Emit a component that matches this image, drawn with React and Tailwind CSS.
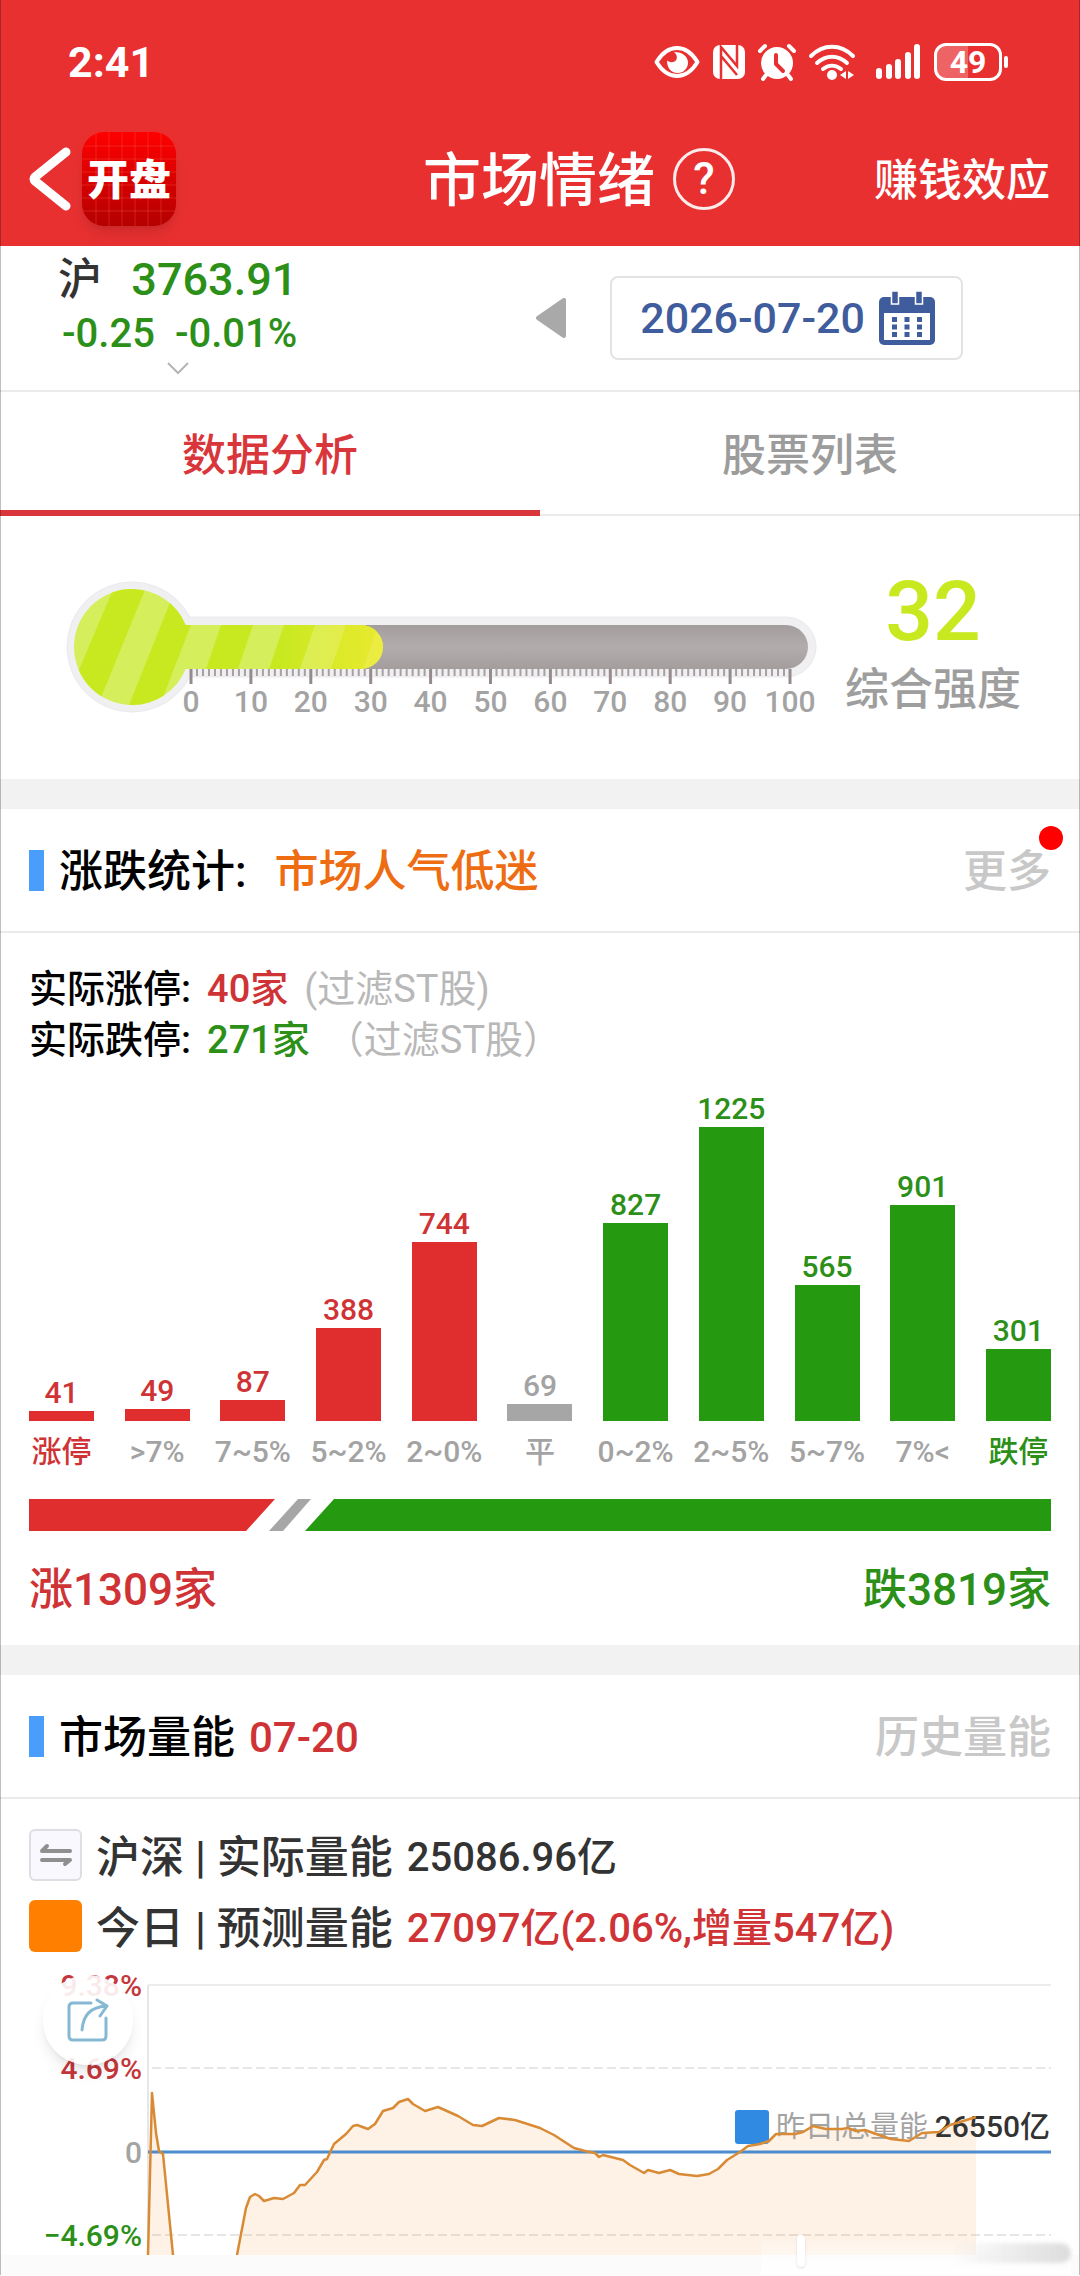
import React, { useState } from "react";

const distribution = [
  { label: "涨停", value: 41, type: "up", strong: true },
  { label: ">7%", value: 49, type: "up" },
  { label: "7~5%", value: 87, type: "up" },
  { label: "5~2%", value: 388, type: "up" },
  { label: "2~0%", value: 744, type: "up" },
  { label: "平", value: 69, type: "flat" },
  { label: "0~2%", value: 827, type: "down" },
  { label: "2~5%", value: 1225, type: "down" },
  { label: "5~7%", value: 565, type: "down" },
  { label: "7%<", value: 901, type: "down" },
  { label: "跌停", value: 301, type: "down", strong: true },
];

const MAX_BAR_HEIGHT = 294;
const maxValue = Math.max(...distribution.map((item) => item.value));

const morningSpike = "119,290 123,128 127,168 130,186 134,189 144,290";

const volumeLine =
  "208,290 212,269 217,243 221,232 226,229 230,231 235,236 245,233 254,234 265,228 271,220 276,220 288,207 295,195 298,194 305,179 317,169 324,161 328,160 339,164 346,159 354,146 364,143 370,137 379,134 384,139 396,146 409,142 429,151 444,160 453,161 470,153 486,155 511,163 525,170 545,183 556,186 566,188 570,192 574,190 594,195 601,200 615,208 619,205 630,208 641,205 650,209 668,211 680,209 689,204 698,195 711,187 719,181 731,179 740,176 747,169 766,169 774,167 784,161 797,164 813,164 819,163 827,166 836,165 850,170 862,174 880,176 893,168 910,167 921,160 931,157 947,152";

const getTextColor = (type) => {
  switch (type) {
    case "up":
      return "text-[#cf3336]";
    case "down":
      return "text-[#2c9018]";
    default:
      return "text-[#a3a3a3]";
  }
};

const getBarColor = (type) => {
  switch (type) {
    case "up":
      return "bg-[#e02e2e]";
    case "down":
      return "bg-[#25990f]";
    default:
      return "bg-[#a6a6a6]";
  }
};

const StatusIcons = () => (
  <div className="flex items-center">
    {/* Eye comfort */}
    <svg className="w-[46px] h-[36px]" viewBox="0 0 46 36" fill="none">
      <path
        d="M2.5 18C8 9 15 4 23 4s15 5 20.500 14C38 27 31 32 23 32S8 27 2.500 18Z"
        stroke="white"
        strokeWidth="4"
        strokeLinejoin="round"
      />
      <path
        d="M20 8c4 3 4 9-1 10-2 .5-4 0-6-1.500C13 24 17 29 23.500 29S34 24 34 18.500 29 8 20 8Z"
        fill="white"
      />
    </svg>
    {/* NFC */}
    <svg className="w-[34px] h-[36px] ml-3" viewBox="0 0 34 36">
      <rect x="1" y="1" width="32" height="34" rx="7" fill="white" />
      <path
        d="M9 35V3l16 19V2M9 12l16 19M25 1v20M9 15v20"
        stroke="#e83031"
        strokeWidth="2.5"
        fill="none"
      />
    </svg>
    {/* Alarm */}
    <svg className="w-[38px] h-[38px] ml-3" viewBox="0 0 38 38" fill="none">
      <circle cx="19" cy="20" r="16" fill="white" />
      <path
        d="M2 8l5-5M36 8l-5-5M8 32l-3 4M30 32l3 4"
        stroke="white"
        strokeWidth="4"
        strokeLinecap="round"
      />
      <path
        d="M18 12v9l7 7"
        stroke="#e83031"
        strokeWidth="4"
        strokeLinecap="round"
        strokeLinejoin="round"
      />
    </svg>
    {/* Wi-Fi */}
    <svg className="w-[48px] h-[38px] ml-3" viewBox="0 0 48 38" fill="none">
      <path
        d="M3 13C15 .5 33 .5 45 13M9 20c9-8.500 21-8.500 30 0M15 26c5.500-4.500 12.500-4.500 18 0"
        stroke="white"
        strokeWidth="4"
        strokeLinecap="round"
      />
      <circle cx="24" cy="32" r="5" fill="white" />
      <path d="M38 28v8l-6-4ZM40 28v8l6-4Z" fill="white" />
    </svg>
    {/* Signal */}
    <svg className="w-[46px] h-[36px] ml-5" viewBox="0 0 46 36">
      <rect x="0" y="24" width="6" height="11" rx="3" fill="white" />
      <rect x="10" y="20" width="6" height="15" rx="3" fill="white" />
      <rect x="19" y="15" width="6" height="20" rx="3" fill="white" />
      <rect x="29" y="8" width="6" height="27" rx="3" fill="white" />
      <rect x="38" y="0" width="6" height="35" rx="3" fill="white" />
    </svg>
    {/* Battery */}
    <div className="ml-3 flex items-center gap-0.5">
      <div className="w-[68px] h-[38px] rounded-xl border-3 border-white bg-linear-to-r from-white/25 from-50% to-transparent to-50% flex items-center justify-center text-[32px] leading-[32px] font-bold">
        49
      </div>
      <div className="w-1 h-3 rounded-full bg-white"></div>
    </div>
  </div>
);

const Header = () => (
  <header className="bg-[#e83031] text-white pt-10 pb-5">
    <div className="flex items-center justify-between h-[44px] mb-12 pl-[68px] pr-[72px]">
      <div className="text-[43px] leading-[44px] font-bold">2:41</div>
      <StatusIcons />
    </div>
    <div className="grid grid-cols-[1fr_auto_1fr] items-center h-[94px] pl-7 pr-[30px]">
      <div className="flex items-center gap-2.5">
        <button aria-label="返回">
          <svg className="w-[44px] h-[64px]" viewBox="0 0 44 64" fill="none">
            <path
              d="M38 5L7 30q-2 2 0 4l31 25"
              stroke="white"
              strokeWidth="9"
              strokeLinecap="round"
              strokeLinejoin="round"
            />
          </svg>
        </button>
        <div className="relative w-[94px] h-[94px] rounded-[22px] overflow-hidden shadow-lg bg-linear-to-b from-[#ff0000] to-[#b40000] flex items-center justify-center">
          <svg
            className="absolute inset-0 w-full h-full"
            viewBox="0 0 94 94"
            stroke="#ff6a5a"
            strokeOpacity="0.3"
          >
            <path d="M14 0v94M27 0v94M40 0v94M53 0v94M66 0v94M79 0v94M0 14h94M0 27h94M0 40h94M0 53h94M0 66h94M0 79h94" />
          </svg>
          <span className="relative pt-1 text-[42px] leading-[50px] font-black">
            开盘
          </span>
        </div>
      </div>
      <h1 className="pt-1 text-[58px] leading-[64px]">市场情绪</h1>
      <div className="flex items-center justify-between pl-[18px]">
        <button
          aria-label="帮助"
          className="w-[62px] h-[62px] rounded-full border-3 border-white/90 text-[44px] leading-[56px]"
        >
          ?
        </button>
        <a href="#profit" className="pt-1 text-[44px] leading-[60px]">
          赚钱效应
        </a>
      </div>
    </div>
  </header>
);

const QuoteBar = () => (
  <div className="flex justify-between h-[146px] pl-[58px] pr-[117px] border-b-2 border-[#ebebeb]">
    <button className="flex flex-col items-center pt-[7px] text-[#2c9018]">
      <span className="flex w-full items-center justify-between text-[45px] leading-[54px]">
        <span className="text-[44px] text-[#333333]">沪</span>
        3763.91
      </span>
      <span className="flex gap-5 pl-1 text-[40px] leading-[54px]">
        <span>-0.25</span>
        <span>-0.01%</span>
      </span>
      <svg className="w-6 h-3.5" viewBox="0 0 24 14" fill="none">
        <path d="M2 2l10 10L22 2" stroke="#b5b5b5" strokeWidth="2" />
      </svg>
    </button>
    <div className="flex items-center gap-[43px]">
      <button aria-label="前一天">
        <svg className="w-8 h-10" viewBox="0 0 32 40">
          <path
            d="M29 2v36L3 20Z"
            fill="#a9a9a9"
            stroke="#a9a9a9"
            strokeWidth="4"
            strokeLinejoin="round"
          />
        </svg>
      </button>
      <button className="flex items-center gap-3.5 h-[84px] pl-7 pr-[26px] rounded-lg border-2 border-[#e3e3e3] text-[#3f5c9c] text-[43px] leading-[60px]">
        2026-07-20
        <svg className="w-[56px] h-[56px]" viewBox="0 0 56 56">
          <rect y="7" width="56" height="48" rx="5" fill="#3f5c9c" />
          <rect x="5" y="23" width="46" height="27" fill="white" />
          <path
            d="M12.500 1h7v13h-7ZM36.500 1h7v13h-7Z"
            fill="#3f5c9c"
            stroke="white"
            strokeWidth="1.5"
          />
          <path
            d="M13 29.500h30M13 37h30M13 44.500h30"
            stroke="#3f5c9c"
            strokeWidth="5"
            strokeDasharray="5 7.5"
          />
        </svg>
      </button>
    </div>
  </div>
);

const Tabs = () => {
  const [active, setActive] = useState("数据分析");

  return (
    <div className="grid grid-cols-2">
      {["数据分析", "股票列表"].map((tab) => (
        <button
          key={tab}
          onClick={() => setActive(tab)}
          className={`h-[124px] text-[44px] leading-[60px] ${
            active === tab
              ? "pt-2.5 border-b-6 border-[#d9363b] text-[#d9363b]"
              : "pt-1.5 border-b-2 border-[#ebebeb] text-[#9c9c9c]"
          }`}
        >
          {tab}
        </button>
      ))}
    </div>
  );
};

const Thermometer = () => (
  <svg className="flex-1 min-w-0" viewBox="0 0 760 145">
    <defs>
      <linearGradient id="track" x1="0" y1="0" x2="0" y2="1">
        <stop offset="0" stopColor="#a39e9d" />
        <stop offset="0.5" stopColor="#b2adac" />
        <stop offset="1" stopColor="#a39e9d" />
      </linearGradient>
      <linearGradient id="hot" x1="0" y1="0" x2="1" y2="0">
        <stop offset="0" stopColor="#f5ea35" stopOpacity="0" />
        <stop offset="1" stopColor="#f5ea35" stopOpacity="0.75" />
      </linearGradient>
      <clipPath id="mercury">
        <circle cx="72" cy="72" r="58" />
        <path d="M72 50H301a22 22 0 0 1 0 44H72Z" />
      </clipPath>
    </defs>
    <g fill="#f0f0f2" stroke="#eaeaee">
      <circle cx="72" cy="72" r="65" />
      <rect x="72" y="42" width="684" height="60" rx="30" />
    </g>
    <circle cx="72" cy="72" r="64" fill="#f0f0f2" />
    <rect x="100" y="50" width="648" height="44" rx="22" fill="url(#track)" />
    <g clipPath="url(#mercury)">
      <rect width="330" height="145" fill="#d5ef5c" />
      <g fill="#c8e920">
        <path d="M55 10H87L38 130H4Z" />
        <path d="M117 10H146L131 50 100 130H69Z" />
        <path d="M161 50h32l-15 44h-32Z" />
        <path d="M224 50h31l-15 44h-31Z" />
        <path d="M286 50h32l-15 44h-32Z" />
      </g>
      <rect x="220" y="50" width="103" height="44" fill="url(#hot)" />
    </g>
    {Array.from({ length: 101 }, (_, i) => (
      <line
        key={i}
        x1={131 + i * 5.99}
        x2={131 + i * 5.99}
        y1="94"
        y2={i % 10 === 0 ? 109 : 101}
        stroke={i % 10 === 0 ? "#958b8d" : "#a79fa0"}
        strokeWidth={i % 10 === 0 ? 3 : 2}
      />
    ))}
    {Array.from({ length: 11 }, (_, i) => (
      <text
        key={i}
        x={131 + i * 59.9}
        y="137"
        textAnchor="middle"
        fontSize="30"
        fill="#a3a3a3"
      >
        {i * 10}
      </text>
    ))}
  </svg>
);

const SectionTitle = ({ title, note, noteColor, action, dot }) => (
  <div className="flex items-center justify-between h-[124px] px-[29px] border-b-2 border-[#ebebeb] text-[44px] leading-[60px]">
    <div className="flex items-center">
      <div className="w-[15px] h-[41px] mr-[15px] bg-[#4a9dfb]"></div>
      <h2 className="pt-1 text-black">{title}</h2>
      <span className={`pt-1 ${noteColor}`}>{note}</span>
    </div>
    <a href="#more" className="relative pt-1 text-[#c8c8c8]">
      {action}
      {dot && (
        <span className="absolute -top-3 -right-3 w-6 h-6 rounded-full bg-[#ff0000]"></span>
      )}
    </a>
  </div>
);

const Distribution = () => (
  <div className="px-[29px] pt-[31px] pb-[25px]">
    <div className="text-[38px] leading-[51px]">
      <p>
        <span className="text-black">实际涨停:</span>
        <span className="ml-4 text-[#cf3336]">40家</span>
        <span className="ml-4 font-normal text-[#b8b8b8]">(过滤ST股)</span>
      </p>
      <p>
        <span className="text-black">实际跌停:</span>
        <span className="ml-4 text-[#2c9018]">271家</span>
        <span className="ml-4 font-normal text-[#b8b8b8]">（过滤ST股）</span>
      </p>
    </div>

    <div className="flex items-end justify-between mt-[25px] text-[30px] leading-[36px]">
      {distribution.map((item) => (
        <div key={item.label} className="flex flex-col items-center w-[65px]">
          <span className={getTextColor(item.type)}>{item.value}</span>
          <div
            className={`w-full ${getBarColor(item.type)}`}
            style={{ height: `${(item.value / maxValue) * MAX_BAR_HEIGHT}px` }}
          ></div>
          <span
            className={`mt-[13px] whitespace-nowrap ${
              item.strong ? getTextColor(item.type) : "text-[#a3a3a3]"
            }`}
          >
            {item.label}
          </span>
        </div>
      ))}
    </div>

    {/* Up / flat / down share */}
    <svg
      className="block w-full h-8 mt-[29px]"
      viewBox="0 0 1022 32"
      preserveAspectRatio="none"
    >
      <path d="M0 0H246L217 32H0Z" fill="#e02e2e" />
      <path d="M269 0H282L254 32H240Z" fill="#a6a6a6" />
      <path d="M305 0H1022V32H276Z" fill="#25990f" />
    </svg>
    <div className="flex justify-between mt-[29px] text-[44px] leading-[60px]">
      <span className="text-[#cf3336]">涨1309家</span>
      <span className="text-[#2c9018]">跌3819家</span>
    </div>
  </div>
);

const VolumeChart = () => (
  <div className="relative mt-[13px]">
    <svg className="block w-full" viewBox="0 0 1022 290">
      <g stroke="#e6e6e6" strokeWidth="2">
        <path d="M119 20H1022" stroke="#ececec" />
        <path d="M119 20V290" />
        <path d="M123 103H1022M123 270H1022" strokeDasharray="9 4" />
      </g>
      <path
        d={`M119 290L${morningSpike}Z`}
        fill="#fa9338"
        fillOpacity="0.13"
      />
      <path
        d={`M208 290L${volumeLine}L947 290Z`}
        fill="#fa9338"
        fillOpacity="0.13"
      />
      <rect x="706" y="145" width="34" height="34" rx="3" fill="#308ae2" />
      <text x="747" y="172" fontSize="29" fontWeight="400" fill="#a3a3a3">
        昨日|总量能
      </text>
      <text x="1021" y="172" fontSize="30" textAnchor="end" fill="#333333">
        26550亿
      </text>
      <path d="M119 187H1022" stroke="#4a8ccc" strokeWidth="3" />
      <g fill="none" stroke="#d98a35" strokeWidth="2.5" strokeLinejoin="round">
        <polyline points={morningSpike} />
        <polyline points={volumeLine} />
      </g>
      <g fontSize="30" textAnchor="end">
        <text x="113" y="31" fill="#c4373b">
          9.38%
        </text>
        <text x="113" y="114" fill="#c4373b">
          4.69%
        </text>
        <text x="113" y="198" fill="#a3a3a3">
          0
        </text>
        <text x="113" y="281" fill="#2c9018">
          −4.69%
        </text>
      </g>
    </svg>
    <button
      aria-label="分享"
      className="absolute left-3.5 top-2.5 w-[90px] h-[90px] rounded-full bg-white/90 shadow-lg flex items-center justify-center"
    >
      <svg
        className="w-[44px] h-[44px]"
        viewBox="0 0 44 44"
        fill="none"
        stroke="#85b9d3"
        strokeWidth="3"
        strokeLinecap="round"
        strokeLinejoin="round"
      >
        <path d="M25 5H7q-4 0-4 4v29q0 4 4 4h29q4 0 4-4V20" />
        <path d="M16 32C17 18 24 9 40 8M31 2l10 6-7 10" />
      </svg>
    </button>
    {/* Faded mark in the corner */}
    <div className="absolute -right-5 -bottom-5 w-[310px] h-10 bg-linear-to-b from-transparent to-white">
      <div className="absolute right-0 top-2 w-[120px] h-5 rounded-full bg-linear-to-r from-transparent to-[#dcdcdc] blur-[2px]"></div>
      <div className="absolute left-9 top-0 w-2 h-8 rounded-full bg-white shadow-sm"></div>
    </div>
  </div>
);

const VolumeSection = () => (
  <div className="px-[29px] pt-[30px] text-[#333333]">
    <div className="flex items-center h-[52px] mb-[19px] text-[44px] leading-[60px]">
      <button
        aria-label="切换"
        className="w-[53px] h-[52px] mr-3.5 rounded-md border-2 border-[#dedee4] bg-[#f8f8fe] flex items-center justify-center"
      >
        <svg
          className="w-8 h-6"
          viewBox="0 0 32 24"
          fill="none"
          stroke="#8f8f8f"
          strokeWidth="4"
          strokeLinecap="round"
          strokeLinejoin="round"
        >
          <path d="M30 8H2l5-5M2 17h28l-5 4" />
        </svg>
      </button>
      <span className="pt-1.5">沪深 | 实际量能</span>
      <span className="ml-3.5 pt-1.5 text-[40px]">25086.96亿</span>
    </div>
    <div className="flex items-center h-[52px] text-[44px] leading-[60px]">
      <div className="w-[53px] h-[52px] mr-3.5 rounded-md bg-[#ff7f00]"></div>
      <span className="pt-1.5">今日 | 预测量能</span>
      <span className="ml-3.5 pt-1.5 text-[40px] text-[#cf3336]">
        27097亿(2.06%,增量547亿)
      </span>
    </div>
    <VolumeChart />
  </div>
);

const App = () => {
  return (
    <div className="relative overflow-hidden bg-white font-['Roboto','Noto_Sans_CJK_SC',sans-serif] font-medium">
      <Header />
      <QuoteBar />
      <Tabs />
      <section className="flex items-center gap-[25px] py-[59px] pl-[60px] pr-[59px]">
        <Thermometer />
        <div className="text-center">
          <div className="text-[84px] leading-[72px] text-[#c8e920]">32</div>
          <div className="mt-3 text-[44px] leading-[60px] text-[#9e9e9e]">
            综合强度
          </div>
        </div>
      </section>
      <section className="border-t-[30px] border-[#f2f2f2]">
        <SectionTitle
          title="涨跌统计:"
          note="市场人气低迷"
          noteColor="ml-7 text-[#ee6c12]"
          action="更多"
          dot
        />
        <Distribution />
      </section>
      <section className="border-t-[30px] border-[#f2f2f2]">
        <SectionTitle
          title="市场量能"
          note="07-20"
          noteColor="ml-3.5 text-[42px] text-[#cf3336]"
          action="历史量能"
        />
        <VolumeSection />
      </section>
      <div className="h-5 bg-[#fbfbfb]"></div>
      {/* Hairline frame */}
      <div className="absolute inset-0 border-x border-black/25 pointer-events-none"></div>
    </div>
  );
};

export default App;
